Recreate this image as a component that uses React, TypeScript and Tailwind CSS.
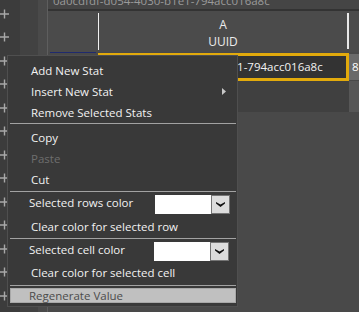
import { ReactNode } from "react";

const uuid = "0a0cdfdf-d054-4030-b1e1-794acc016a8c";

function Plus() {
  return (
    <div className="h-[23.5px] flex items-center">
      <svg width="10" height="10" viewBox="0 0 10 10">
        <path d="M0 5H9M4.5 0.5V9.5" stroke="#a8a8a8" strokeWidth="1.4" />
      </svg>
    </div>
  );
}

function Item({ children, disabled, arrow }: { children: ReactNode; disabled?: boolean; arrow?: boolean }) {
  return (
    <div className={`h-[21px] leading-[21px] pl-[23px] pr-[11px] flex items-center justify-between ${disabled ? "text-[#6e6e6e]" : "text-[#f2f2f2]"}`}>
      <span>{children}</span>
      {arrow && (
        <svg width="4" height="7" viewBox="0 0 4 7">
          <path d="M0 0L4 3.5L0 7Z" fill="#c8c8c8" />
        </svg>
      )}
    </div>
  );
}

function Sep({ className }: { className?: string }) {
  return <div className={`h-px ml-[2px] mr-px bg-[#a2a2a2] ${className ?? ""}`} />;
}

function ColorPick({ pr }: { pr: string }) {
  return (
    <div className={`flex mt-[3px] ${pr}`}>
      <div className="w-[56px] h-[19px] bg-white" />
      <div className="w-[19px] h-[19px] bg-[#dcdcdc] border border-[#747474] flex items-center justify-center">
        <svg width="9" height="5" viewBox="0 0 9 5">
          <path d="M0 0L4.5 2.6L9 0V1.6L4.5 5L0 1.6Z" fill="#111" />
        </svg>
      </div>
    </div>
  );
}

export default function App() {
  return (
    <div className="w-[359px] h-[312px] relative overflow-hidden flex bg-[#494949] font-['Open_Sans',sans-serif] text-[11.5px]">
      {/* left gutter with expanders */}
      <div className="w-[20px] bg-[#3c3c3c] flex flex-col pt-[2px]">
        {Array.from({ length: 13 }).map((_, i) => (
          <Plus key={i} />
        ))}
      </div>
      <div className="w-[18px] bg-[#424242]" />
      <div className="w-[9px] bg-[#4a4a4a]" />

      {/* grid */}
      <div className="flex-1 flex flex-col border-l border-[#5e5e5e]">
        <div className="h-[9px] overflow-hidden bg-[#454545] pl-[5px]">
          <div className="-mt-[6px] leading-[14px] text-[#9a9a9a]">{uuid}</div>
        </div>
        <div className="h-[2px] bg-[#333333]" />
        <div className="h-[41px] flex bg-[#4b4b4b]">
          <div className="w-[50px]" />
          <div className="w-px my-[2px] bg-[#f0f0f0]" />
          <div className="w-[248px] flex flex-col items-center pt-[5px] text-[12px] text-[#ececec] leading-[17px]">
            <span>A</span>
            <span>UUID</span>
          </div>
          <div className="w-[2px] mt-[2px] mb-[3px] bg-[#e8e8e8]" />
          <div className="flex-1" />
        </div>
        <div className="h-[29px] flex">
          <div className="w-[50px]">
            <div className="h-px mx-[2px] bg-[#1f2a6e]" />
          </div>
          <div className="w-[251px] h-[28px] mt-px border-[3px] border-[#e2aa0c] bg-[#333333] pl-[5px] flex items-center text-[#f2f2f2] overflow-hidden whitespace-nowrap">
            {uuid}
          </div>
          <div className="flex-1 h-[26px] mt-[2px] bg-[#6a6a6a] pl-[3px] flex items-center text-white">8</div>
        </div>
        <div className="h-[31px] flex bg-[#404040]">
          <div className="w-[301px]" />
          <div className="flex-1 bg-[#575757]" />
        </div>
      </div>

      {/* context menu */}
      <div className="absolute left-[7px] top-[55px] w-[231px] h-[252px] bg-[#393939] border border-[#4f4f4f] flex flex-col pt-[4px] pb-[3px]">
        <Item>Add New Stat</Item>
        <Item arrow>Insert New Stat</Item>
        <Item>Remove Selected Stats</Item>
        <Sep className="mb-[3px]" />
        <Item>Copy</Item>
        <Item disabled>Paste</Item>
        <Item>Cut</Item>
        <Sep className="mt-px" />
        <div className="h-[24px] flex items-start justify-between pl-[21px] text-[#f2f2f2]">
          <span className="leading-[21px]">Selected rows color</span>
          <ColorPick pr="pr-[7px]" />
        </div>
        <Item>Clear color for selected row</Item>
        <Sep className="mt-px" />
        <div className="h-[23px] flex items-start justify-between pl-[21px] text-[#f2f2f2]">
          <span className="leading-[21px]">Selected cell color</span>
          <ColorPick pr="pr-[8px]" />
        </div>
        <Item>Clear color for selected cell</Item>
        <Sep className="mt-[2px]" />
        <div className="mt-[2px] h-[15px] ml-[2px] mr-px bg-[#c0c0c0] border border-[#a8a8a8] leading-[13px] pl-[18px] text-[#4c4c4c]">
          Regenerate Value
        </div>
      </div>
    </div>
  );
}
